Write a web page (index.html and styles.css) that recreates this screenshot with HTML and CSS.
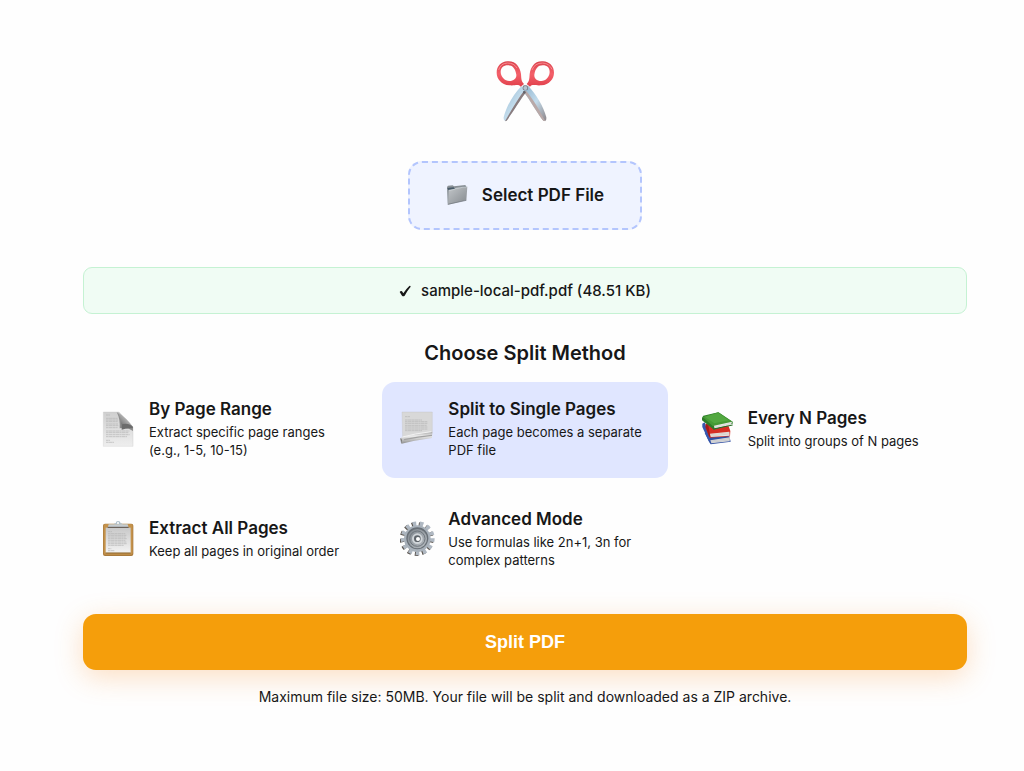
FILE: index.html
```html
<!DOCTYPE html>
<html lang="en">
<head>
  <meta charset="UTF-8" />
  <meta name="viewport" content="width=device-width, initial-scale=1.0"/>
  <title>Split PDF</title>
  <link rel="stylesheet" href="styles.css">
</head>
<body>
  <main class="splitter">
    <svg class="hero-icon" viewBox="43 30 180 192" aria-hidden="true">
      <defs>
        <linearGradient id="blade" x1="0" y1="0" x2="1" y2="1">
          <stop offset="0" stop-color="#8fb4cf"/>
          <stop offset="0.5" stop-color="#c3dcec"/>
          <stop offset="1" stop-color="#8d8588"/>
        </linearGradient>
        <linearGradient id="handle" x1="0" y1="0" x2="0" y2="1">
          <stop offset="0" stop-color="#d9434d"/>
          <stop offset="0.5" stop-color="#f4606a"/>
          <stop offset="1" stop-color="#e0404b"/>
        </linearGradient>
      </defs>
      <path d="M123 108 L138 124 C118 150 96 188 78 212 Q68 216 69 202 C78 168 98 132 123 108Z" fill="url(#blade)"/>
      <path d="M138 124 C118 150 96 188 78 212 L73 214 C92 180 112 146 132 120Z" fill="#8a7c7e"/>
      <path d="M143 108 L128 124 C148 150 168 188 188 212 Q198 217 197 202 C188 168 166 132 143 108Z" fill="url(#blade)"/>
      <path d="M128 124 C148 150 168 188 188 212 L194 214 C176 178 156 146 136 122Z" fill="#b9a9a8"/>
      <path d="M80 34 C106 32 118 52 121 72 C122 88 122 94 130 102 L120 110 C112 101 104 108 86 106 C62 104 48 86 48 68 C48 48 62 35 80 34Z M82 46 C68 46 60 54 60 66 C61 82 72 92 86 93 C100 93 108 84 107 74 C104 56 96 46 82 46Z" fill="url(#handle)" fill-rule="evenodd"/>
      <path d="M187 34 C161 32 150 52 147 72 C146 88 146 94 138 102 L148 110 C156 101 164 108 182 106 C206 104 220 86 220 68 C220 48 206 35 187 34Z M186 46 C200 46 207 54 207 66 C206 82 196 92 182 93 C168 93 160 84 161 74 C164 56 172 46 186 46Z" fill="url(#handle)" fill-rule="evenodd"/>
      <path d="M54 60 Q60 40 80 39 Q100 39 109 54 M154 60 Q162 39 186 39 Q206 40 214 58" fill="none" stroke="#f98a8f" stroke-width="3"/>
      <rect x="126" y="106" width="16" height="15" rx="5" fill="#777f89"/>
      <circle cx="134" cy="114" r="6" fill="#b5c4d0"/>
      <circle cx="131" cy="127" r="4" fill="#62646c"/>
    </svg>

    <input type="file" id="pdfFile" class="visually-hidden" accept="application/pdf">
    <label for="pdfFile" class="file-label">
      <svg class="folder-icon" viewBox="0 0 66 66" aria-hidden="true">
        <defs>
          <linearGradient id="folder" x1="0" y1="0" x2="1" y2="1">
            <stop offset="0" stop-color="#c3c7ca"/>
            <stop offset="1" stop-color="#84898e"/>
          </linearGradient>
        </defs>
        <path d="M3 9 L6 5 L20 4 L24 7 L58 3 L61 8 L58 46 L5 59Z" fill="#899096"/>
        <path d="M4 12 L23 10 L26 14 L61 7 L60 12 L8 20Z" fill="#475967"/>
        <path d="M8 19 L25 16 L30 13 L64 8 L61 49 L6 62Z" fill="url(#folder)"/>
        <path d="M8 19 L25 16 L30 13 L64 8" fill="none" stroke="#e1e5e8" stroke-width="2"/>
        <path d="M5 61 L61 49" stroke="#6b7178" stroke-width="2"/>
      </svg>
      Select PDF File
    </label>

    <div class="file-info">
      <svg class="check-icon" viewBox="0 0 36 36" aria-hidden="true">
        <path d="M2 21 Q5 17 9 19 L13 25 Q21 12 31 3 Q34 1 35 5 Q24 18 17 32 Q13 36 9 32Z" fill="#171717"/>
      </svg>
      <span>sample-local-pdf.pdf (48.51 KB)</span>
    </div>

    <h3>Choose Split Method</h3>

    <div class="options" role="radiogroup" aria-label="Choose Split Method">
      <label class="option">
        <input type="radio" name="method" value="range" class="visually-hidden">
        <svg class="option-icon" viewBox="0 0 108 108" aria-hidden="true">
          <defs>
            <linearGradient id="paper" x1="0" y1="0" x2="0" y2="1">
              <stop offset="0" stop-color="#cfcfcf"/>
              <stop offset="1" stop-color="#eeeeee"/>
            </linearGradient>
            <linearGradient id="fold" x1="0" y1="1" x2="1" y2="0">
              <stop offset="0" stop-color="#555"/>
              <stop offset="0.5" stop-color="#a9a9a9"/>
              <stop offset="1" stop-color="#f4f4f4"/>
            </linearGradient>
          </defs>
          <path d="M7 3 H54 L96 48 V106 H7Z" fill="url(#paper)" stroke="#c4c4c4"/>
          <path d="M47 3 Q58 24 56 52 Q76 46 96 60 L96 48Z" fill="#8e8e8e"/>
          <path d="M49 3 Q60 20 60 40 Q80 36 96 48 Q76 20 49 3Z" fill="url(#fold)"/>
          <path d="M62 40 Q82 34 96 48 L94 52 Q76 50 62 56Z" fill="#6c6c6c"/>
          <path d="M15 12 H27 M15 22 H50 M15 27 H51 M15 32 H50 M15 39 H51 M15 44 H52 M15 50 H50 M15 60 H85 M15 65 H83 M15 71 H86 M15 77 H78 M15 88 H27 M15 94 H39" stroke="#b4b4b4" stroke-width="2" stroke-dasharray="7 1 11 1"/>
        </svg>
        <span class="option-text">
          <span class="option-title">By Page Range</span>
          <span class="option-desc">Extract specific page ranges (e.g., 1-5, 10-15)</span>
        </span>
      </label>

      <label class="option">
        <input type="radio" name="method" value="single" class="visually-hidden" checked>
        <svg class="option-icon" viewBox="0 0 108 108" aria-hidden="true">
          <defs>
            <linearGradient id="roll" x1="0" y1="0" x2="0" y2="1">
              <stop offset="0" stop-color="#a8a8a8"/>
              <stop offset="0.35" stop-color="#ededed"/>
              <stop offset="1" stop-color="#8f8f8f"/>
            </linearGradient>
          </defs>
          <path d="M6 3 H97 V66 L8 84Z" fill="#d8d8d8" stroke="#c0c0c0"/>
          <path d="M15 17 H30 M15 27 H66 M15 32 H82 M15 37 H83 M15 43 H80 M15 48 H83 M15 54 H82 M15 59 H66" stroke="#b4b4b4" stroke-width="2" stroke-dasharray="7 1 11 1"/>
          <path d="M8 78 Q50 68 94 63 Q98 62 97 69 L96 81 Q46 88 5 98 Q2 96 1 83 Q3 79 8 78Z" fill="url(#roll)"/>
          <path d="M7 78 Q42 68 94 62" fill="none" stroke="#f2f2f2" stroke-width="3"/>
          <path d="M3 81 Q8 86 5 97 L1 83Z" fill="#777"/>
          <path d="M12 86 Q54 77 96 73" fill="none" stroke="#a3a3a3" stroke-width="4"/>
        </svg>
        <span class="option-text">
          <span class="option-title">Split to Single Pages</span>
          <span class="option-desc">Each page becomes a separate PDF file</span>
        </span>
      </label>

      <label class="option">
        <input type="radio" name="method" value="every" class="visually-hidden">
        <svg class="option-icon" viewBox="0 0 108 108" aria-hidden="true">
          <path d="M14 66 L28 94 L32 100 L92 92 L88 76Z" fill="#2f4fa3"/>
          <path d="M31 88 L90 79 L89 91 L34 97Z" fill="#dcdcdc"/>
          <path d="M33 90 L90 82 M33 94 L90 87" stroke="#a3a8b3" stroke-width="1"/>
          <path d="M7 38 L14 34 L30 82 L28 94 L7 48Z" fill="#3657ae"/>
          <path d="M17 38 L86 46 L91 60 L90 76 L29 80 L17 50Z" fill="#d62d24"/>
          <path d="M30 68 L88 62 L89 74 L32 78Z" fill="#e9e4e1"/>
          <path d="M32 71 L88 65 M32 75 L88 69" stroke="#b5a9a5" stroke-width="1"/>
          <path d="M17 38 L25 42 L31 79 L27 76 L17 49Z" fill="#a61b18"/>
          <path d="M6 20 L10 14 L55 4 L98 32 L98 38 L42 56 L36 52 L6 28Z" fill="#2d7d29"/>
          <path d="M8 18 L55 4 L97 32 L39 46Z" fill="#469a36"/>
          <path d="M14 17 L55 6 L86 28 L43 37Z" fill="#52a840"/>
          <path d="M42 44 L96 32 L93 41 L44 53Z" fill="#efefed"/>
          <path d="M43 47 L94 36 M43 50 L93 39" stroke="#b8b8b2" stroke-width="1"/>
          <path d="M40 54 L98 42" stroke="#246b25" stroke-width="3"/>
        </svg>
        <span class="option-text">
          <span class="option-title">Every N Pages</span>
          <span class="option-desc">Split into groups of N pages</span>
        </span>
      </label>

      <label class="option">
        <input type="radio" name="method" value="all" class="visually-hidden">
        <svg class="option-icon" viewBox="0 0 108 108" aria-hidden="true">
          <defs>
            <linearGradient id="sheet" x1="0" y1="0" x2="0" y2="1">
              <stop offset="0" stop-color="#c8c8c8"/>
              <stop offset="1" stop-color="#f3f3f3"/>
            </linearGradient>
          </defs>
          <rect x="6" y="8" width="91" height="97" rx="6" fill="#a97a3b"/>
          <rect x="8" y="9" width="87" height="92" rx="5" fill="#c4924b"/>
          <path d="M14 20 H89 V95 H14Z" fill="url(#sheet)"/>
          <path d="M14 96 H89" stroke="#705126" stroke-width="2"/>
          <path d="M21 32 H33 M21 38 H73 M21 43 H76 M21 48 H74 M21 53 H77 M21 58 H73 M21 63 H76 M21 68 H77 M21 73 H68 M21 83 H31 M21 89 H40" stroke="#b4b4b4" stroke-width="2" stroke-dasharray="7 1 11 1"/>
          <path d="M38 10 Q40 7 44 7 Q45 0 51 0 Q58 0 59 7 Q63 7 66 11Z" fill="#aebfca"/>
          <circle cx="51" cy="6" r="3" fill="#fff"/>
          <path d="M23 10 H80 L83 20 H20Z" fill="#c5ccd0"/>
          <path d="M20 19 H83" stroke="#59504a" stroke-width="3"/>
        </svg>
        <span class="option-text">
          <span class="option-title">Extract All Pages</span>
          <span class="option-desc">Keep all pages in original order</span>
        </span>
      </label>

      <label class="option">
        <input type="radio" name="method" value="advanced" class="visually-hidden">
        <svg class="option-icon" viewBox="0 0 108 108" aria-hidden="true">
          <defs>
            <linearGradient id="metal" x1="0" y1="0" x2="1" y2="1">
              <stop offset="0" stop-color="#7f868d"/>
              <stop offset="1" stop-color="#b7bdc2"/>
            </linearGradient>
          </defs>
          <circle cx="50" cy="54" r="44" pathLength="130" fill="none" stroke="#5c5650" stroke-width="14" stroke-dasharray="5 5"/>
          <circle cx="53" cy="52" r="44" pathLength="130" fill="none" stroke="#afb8c2" stroke-width="14" stroke-dasharray="5 5"/>
          <circle cx="52" cy="53" r="40" fill="#a8b1ba"/>
          <circle cx="52" cy="52" r="33" fill="#686f76"/>
          <circle cx="52" cy="53" r="29" fill="url(#metal)"/>
          <circle cx="52" cy="53" r="23" fill="none" stroke="#6f767d" stroke-width="3"/>
          <circle cx="52" cy="53" r="16" fill="#d0d5d9"/>
          <circle cx="52" cy="53" r="10" fill="#5f656b"/>
          <circle cx="54" cy="54" r="6" fill="#fff"/>
        </svg>
        <span class="option-text">
          <span class="option-title">Advanced Mode</span>
          <span class="option-desc">Use formulas like 2n+1, 3n for complex patterns</span>
        </span>
      </label>
    </div>

    <button type="button" class="split-btn">Split PDF</button>
    <p class="note">Maximum file size: 50MB. Your file will be split and downloaded as a ZIP archive.</p>
  </main>
</body>
</html>
```

FILE: styles.css
```css
* {
  box-sizing: border-box;
}

body {
  font-family: Inter, "Liberation Sans", sans-serif;
  background: #fefefe;
  margin: 0;
  color: #171717;
}

.splitter {
  display: flex;
  flex-direction: column;
  align-items: center;
  padding: 60px 57px 60px 83px;
}

.visually-hidden {
  position: absolute;
  width: 1px;
  height: 1px;
  margin: 0;
  opacity: 0;
}

.hero-icon {
  width: 60px;
  height: 64px;
  margin-bottom: 37px;
}

.file-label {
  display: flex;
  align-items: center;
  gap: 14px;
  padding: 21px 36px 22px;
  font-size: 17px;
  line-height: 22px;
  font-weight: 600;
  background: #eff3ff;
  border: 2px dashed #b3c5fd;
  border-radius: 14px;
  cursor: pointer;
}

.folder-icon {
  width: 22px;
  height: 22px;
}

.file-info {
  display: flex;
  align-items: center;
  justify-content: center;
  gap: 10px;
  width: 100%;
  margin-top: 37px;
  padding: 12px;
  font-size: 15px;
  line-height: 21px;
  font-weight: 500;
  background: #f0fcf4;
  border: 1px solid #c5f2d3;
  border-radius: 9px;
}

.check-icon {
  width: 12px;
  height: 12px;
}

h3 {
  margin: 26px 0 16px;
  font-size: 20px;
  line-height: 26px;
  font-weight: 600;
}

.options {
  display: grid;
  grid-template-columns: repeat(3, 1fr);
  gap: 14px;
  width: 100%;
}

.option {
  display: flex;
  align-items: center;
  gap: 12px;
  min-height: 96px;
  padding: 17px 18px 19px;
  border-radius: 13px;
  cursor: pointer;
}

.option:has(input:checked) {
  background: #e0e6ff;
}

.option-icon {
  flex: none;
  width: 36px;
  height: 36px;
}

.option-title,
.option-desc {
  display: block;
}

.option-title {
  margin-bottom: 3px;
  font-size: 17px;
  line-height: 21px;
  font-weight: 600;
}

.option-desc {
  font-size: 13px;
  line-height: 18px;
}

.split-btn {
  width: 100%;
  margin-top: 26px;
  padding: 18px;
  font-family: "Liberation Sans", Arial, sans-serif;
  font-size: 18px;
  line-height: 20px;
  font-weight: 700;
  color: white;
  background: #f59e0b;
  border: none;
  border-radius: 13px;
  box-shadow: 0 7px 28px rgba(249, 140, 40, 0.28);
  cursor: pointer;
}

.note {
  margin: 17px 0 0;
  font-size: 14px;
  line-height: 20px;
  text-align: center;
}

@media (max-width: 800px) {
  .splitter {
    padding: 40px 20px;
  }
  .options {
    grid-template-columns: 1fr;
  }
}
```
